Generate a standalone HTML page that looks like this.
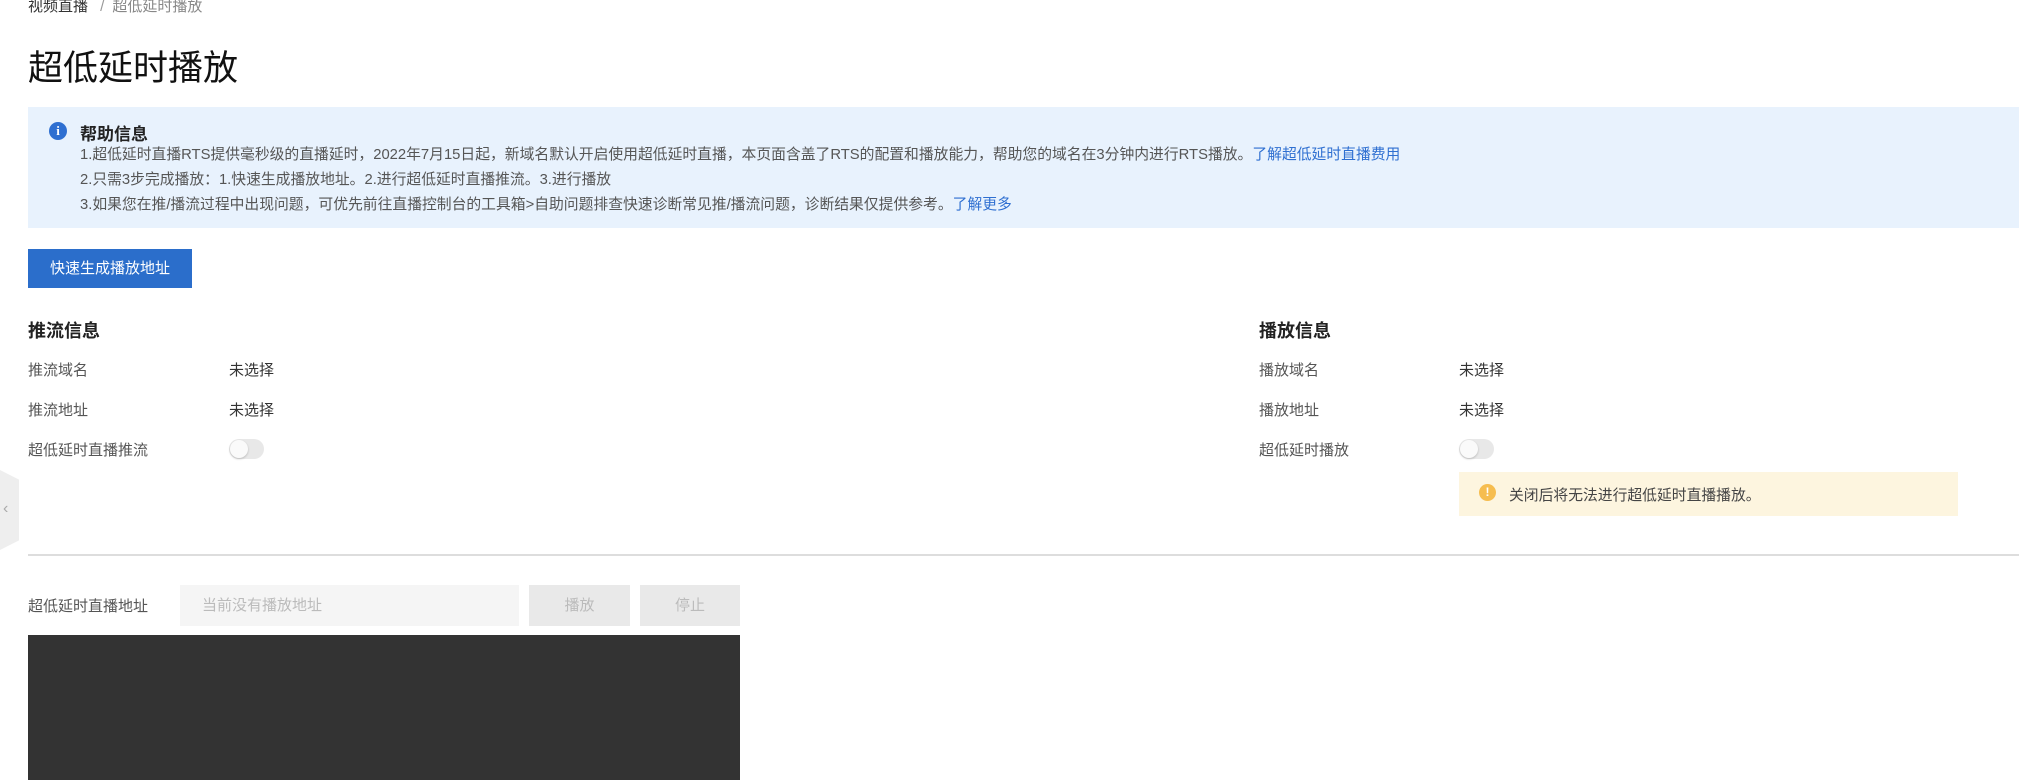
<!DOCTYPE html>
<html><head><meta charset="utf-8"><style>
*{margin:0;padding:0;box-sizing:border-box}
body{width:2019px;height:780px;overflow:hidden;background:#fff;position:relative;font-family:"Liberation Sans","Noto Sans CJK SC",sans-serif;color:#333}
.a{position:absolute;white-space:nowrap}
.lbl{font-size:15px;color:#555}
.val{font-size:15px;color:#333}
.tog{position:absolute;width:35px;height:20px;border-radius:10px;background:#e8e8e8}
.tog:after{content:"";position:absolute;left:1px;top:1px;width:18px;height:18px;border-radius:50%;background:#fafafa;box-shadow:0 1px 2px rgba(0,0,0,.2)}
.h{font-size:18px;font-weight:bold;color:#222}
</style></head><body>
<div class="a" style="left:28px;top:-5px;font-size:15px;color:#333">视频直播 <span style="color:#999;margin:0 8px">/</span><span style="color:#888">超低延时播放</span></div>
<div class="a" style="left:28px;top:40px;font-size:35px;color:#111">超低延时播放</div>
<div class="a" style="left:28px;top:107px;width:1991px;height:121px;background:#e8f2fd"></div>
<div class="a" style="left:49px;top:122px;width:18px;height:18px;border-radius:50%;background:#2e6fd1;color:#fff;font-size:13px;font-weight:bold;text-align:center;line-height:18px;font-family:'Liberation Serif',serif">i</div>
<div class="a" style="left:80px;top:120px;font-size:17px;font-weight:bold;color:#222">帮助信息</div>
<div class="a" style="left:80px;top:146px;font-size:14.8px;color:#555;line-height:18px">1.超低延时直播RTS提供毫秒级的直播延时，2022年7月15日起，新域名默认开启使用超低延时直播，本页面含盖了RTS的配置和播放能力，帮助您的域名在3分钟内进行RTS播放。<span style="color:#2e6fd1">了解超低延时直播费用</span></div>
<div class="a" style="left:80px;top:171px;font-size:14.8px;color:#555;line-height:18px">2.只需3步完成播放：1.快速生成播放地址。2.进行超低延时直播推流。3.进行播放</div>
<div class="a" style="left:80px;top:196px;font-size:14.8px;color:#555;line-height:18px">3.如果您在推/播流过程中出现问题，可优先前往直播控制台的工具箱&gt;自助问题排查快速诊断常见推/播流问题，诊断结果仅提供参考。<span style="color:#2e6fd1">了解更多</span></div>
<div class="a" style="left:28px;top:249px;width:164px;height:39px;background:#2b6ecb;color:#fff;font-size:15px;text-align:center;line-height:39px">快速生成播放地址</div>
<div class="a h" style="left:28px;top:317px">推流信息</div>
<div class="a lbl" style="left:28px;top:359px">推流域名</div><div class="a val" style="left:229px;top:359px">未选择</div>
<div class="a lbl" style="left:28px;top:399px">推流地址</div><div class="a val" style="left:229px;top:399px">未选择</div>
<div class="a lbl" style="left:28px;top:439px">超低延时直播推流</div><div class="tog" style="left:229px;top:439px"></div>
<div class="a h" style="left:1259px;top:317px">播放信息</div>
<div class="a lbl" style="left:1259px;top:359px">播放域名</div><div class="a val" style="left:1459px;top:359px">未选择</div>
<div class="a lbl" style="left:1259px;top:399px">播放地址</div><div class="a val" style="left:1459px;top:399px">未选择</div>
<div class="a lbl" style="left:1259px;top:439px">超低延时播放</div><div class="tog" style="left:1459px;top:439px"></div>
<div class="a" style="left:1459px;top:472px;width:499px;height:44px;background:#fdf5df"></div>
<div class="a" style="left:1479px;top:484px;width:17px;height:17px;border-radius:50%;background:#f6bd4f;color:#fff;font-size:12px;font-weight:bold;text-align:center;line-height:17px">!</div>
<div class="a" style="left:1509px;top:484px;font-size:14.8px;color:#444">关闭后将无法进行超低延时直播播放。</div>
<div class="a" style="left:0;top:470px;width:19px;height:80px;background:#eee;clip-path:polygon(0 0,100% 12%,100% 88%,0 100%)"></div>
<div class="a" style="left:3px;top:500px;font-size:16px;color:#aaa">‹</div>
<div class="a" style="left:28px;top:554px;width:1991px;height:2px;background:#ddd"></div>
<div class="a lbl" style="left:28px;top:595px">超低延时直播地址</div>
<div class="a" style="left:180px;top:585px;width:339px;height:41px;background:#f5f5f5;color:#bbb;font-size:15px;line-height:41px;padding-left:22px">当前没有播放地址</div>
<div class="a" style="left:529px;top:585px;width:101px;height:41px;background:#e9e9e9;color:#bbb;font-size:15px;line-height:41px;text-align:center">播放</div>
<div class="a" style="left:640px;top:585px;width:100px;height:41px;background:#e9e9e9;color:#bbb;font-size:15px;line-height:41px;text-align:center">停止</div>
<div class="a" style="left:28px;top:635px;width:712px;height:145px;background:#333"></div>
</body></html>
